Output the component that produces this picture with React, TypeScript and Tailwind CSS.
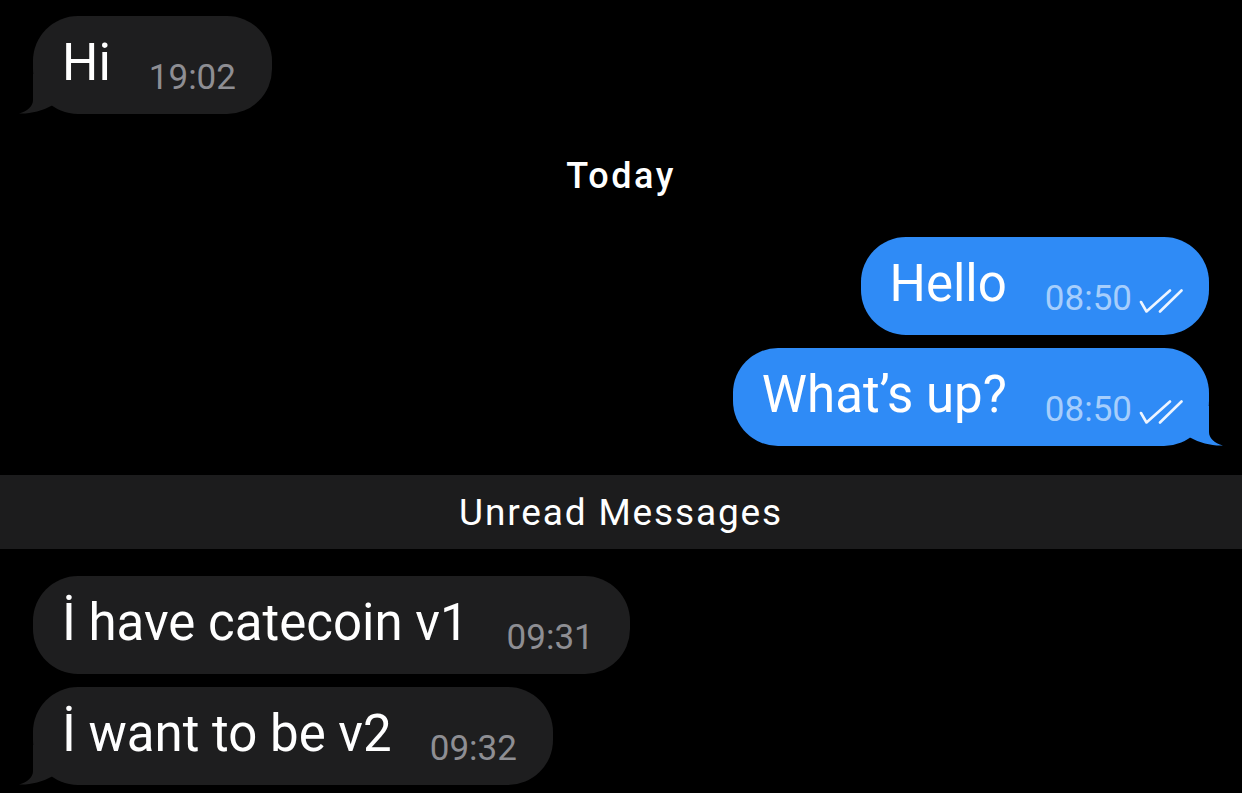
import React from "react";

type Msg = {
  text: string;
  time: string;
  out?: boolean;
  tail?: boolean;
};

function Tail({ out }: { out?: boolean }) {
  // tail hangs off the bottom corner of the bubble
  return (
    <svg
      width="40"
      height="40"
      viewBox="0 0 40 40"
      className={
        out
          ? "absolute right-[-15px] bottom-0 -scale-x-100"
          : "absolute left-[-15px] bottom-0"
      }
    >
      <path
        d="M15 0 L15 26 C15 32 10 37 1 39.5 C12 40 24 37 34 31.5 L34 0 Z"
        fill={out ? "#2f8bf6" : "#1e1e1f"}
      />
    </svg>
  );
}

function Checks() {
  return (
    <svg width="44" height="24" viewBox="0 0 44 24" className="ml-[7px] mb-[3px] shrink-0">
      <path
        d="M2 13 L7.5 22.5 L31 1.5 M21 22.5 L42.5 1.5"
        fill="none"
        stroke="#eef5ff"
        strokeWidth="2.6"
        strokeLinecap="round"
        strokeLinejoin="round"
      />
    </svg>
  );
}

function Bubble({ m }: { m: Msg }) {
  return (
    <div className={m.out ? "flex justify-end pr-[33px]" : "flex justify-start pl-[33px]"}>
      <div
        className={
          "relative flex h-[98px] items-end rounded-[45px] pl-[29px] pb-[19px] " +
          (m.out ? "bg-[#2f8bf6] pr-[26px]" : "bg-[#1e1e1f] pr-[36px]")
        }
      >
        {m.tail && <Tail out={m.out} />}
        <span className="relative mb-[7px] text-[51px] leading-none text-white">{m.text}</span>
        <span
          className={
            "ml-[38px] text-[35px] leading-none " +
            (m.out ? "text-[#a6cefc]" : "text-[#8e8e93]")
          }
        >
          {m.time}
        </span>
        {m.out && <Checks />}
      </div>
    </div>
  );
}

export default function App() {
  return (
    <div
      className="h-[793px] w-[1242px] overflow-hidden bg-black pt-[16px]"
      style={{ fontFamily: "Roboto, 'Liberation Sans', sans-serif" }}
    >
      <Bubble m={{ text: "Hi", time: "19:02", tail: true }} />

      <div className="flex h-[123px] items-center justify-center">
        <span className="text-[36px] font-medium leading-none tracking-[0.07em] text-white">
          Today
        </span>
      </div>

      <div className="flex flex-col gap-[13px]">
        <Bubble m={{ text: "Hello", time: "08:50", out: true }} />
        <Bubble m={{ text: "What’s up?", time: "08:50", out: true, tail: true }} />
      </div>

      <div className="mt-[29px] flex h-[74px] items-center justify-center bg-[#1c1c1d]">
        <span className="text-[37px] leading-none tracking-[0.05em] text-white">
          Unread Messages
        </span>
      </div>

      <div className="mt-[27px] flex flex-col gap-[13px]">
        <Bubble m={{ text: "İ have catecoin v1", time: "09:31" }} />
        <Bubble m={{ text: "İ want to be v2", time: "09:32", tail: true }} />
      </div>
    </div>
  );
}
